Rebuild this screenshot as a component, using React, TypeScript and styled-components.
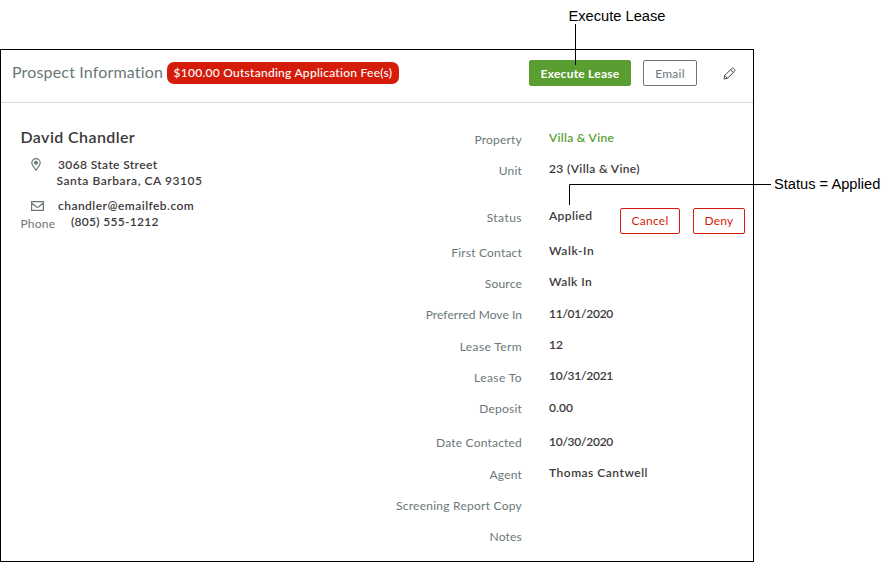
import React from 'react';
import styled, { createGlobalStyle } from 'styled-components';

const GlobalStyle = createGlobalStyle`
  * { box-sizing: border-box; }
  body { margin: 0; background: #fff; overflow: hidden; }
`;

const Page = styled.div`
  position: relative;
  width: 887px;
  height: 562px;
  padding-top: 49px;
  font-family: Lato, sans-serif;
  font-size: 12px;
  line-height: 16px;
  color: #3d3a3b;
  white-space: nowrap;
`;

const Panel = styled.main`
  width: 754px;
  height: 513px;
  border: 1px solid #000;
`;

const Header = styled.header`
  display: flex;
  align-items: flex-start;
  height: 53px;
  padding: 10px 17px 0 11px;
  border-bottom: 1px solid #d9d9d9;
`;

const Title = styled.h1`
  width: 155px;
  margin: 2px 0 0;
  font-size: 16px;
  line-height: 20px;
  font-weight: 400;
  letter-spacing: 0.16px;
  color: #6b7777;
`;

const FeeBadge = styled.span`
  width: 232px;
  height: 22px;
  margin-top: 2px;
  padding-left: 6.5px;
  border-radius: 7px;
  background: #d51c0a;
  color: #fff;
  font-weight: 500;
  line-height: 22px;
  letter-spacing: 0.26px;
`;

const Actions = styled.div`
  display: flex;
  align-items: center;
  gap: 12px;
  margin-left: auto;
`;

type Tone = 'primary' | 'neutral' | 'danger';
const tones: Record<Tone, string> = {
  primary: 'background: #5a9e32; border-color: #5a9e32; color: #fff; font-weight: 700;',
  neutral: 'background: #fff; border-color: #6b7777; color: #6b7777;',
  danger: 'padding-top: 0; background: #fff; border-color: #d51c0a; color: #d51c0a;',
};

const Button = styled.button<{ $tone: Tone; $width: number }>`
  width: ${(p) => p.$width}px;
  height: 26px;
  padding: 2px 0 0;
  border: 1px solid;
  border-radius: 2px;
  font: 400 12px/20px Lato, sans-serif;
  letter-spacing: 0.24px;
  ${(p) => tones[p.$tone]}
`;

const EditIcon = styled.svg`
  width: 13px;
  height: 13px;
  margin-left: 14px;
`;

const Body = styled.div`
  display: flex;
  justify-content: space-between;
  padding: 27px 1px 0 19.5px;
`;

const Contact = styled.section`
  width: 240px;
`;

const Name = styled.h2`
  margin: -3px 0 10px;
  font-size: 16px;
  line-height: 20px;
  font-weight: 600;
  letter-spacing: 0.4px;
`;

const ContactLine = styled.div`
  display: flex;
  height: 16px;
`;

const IconSlot = styled.span`
  display: flex;
  width: 37.5px;
  padding-left: 10.5px;
  align-items: center;
`;

const PinIcon = styled.svg`
  width: 10px;
  height: 13px;
  margin-top: -1px;
`;

const MailIcon = styled.svg`
  width: 13px;
  height: 10px;
`;

const Strong = styled.span<{ $track?: number; $green?: boolean }>`
  font-weight: 600;
  letter-spacing: ${(p) => p.$track ?? 0.3}px;
  color: ${(p) => (p.$green ? '#5a9e32' : 'inherit')};
`;

const SecondLine = styled.div`
  padding-left: 36px;
  margin-bottom: 9px;
`;

const PhoneLine = styled.div`
  display: flex;
`;

const Muted = styled.span<{ $track?: number }>`
  color: #6b7777;
  letter-spacing: ${(p) => p.$track ?? 0.2}px;
`;

const PhoneLabel = styled(Muted)`
  width: 50.5px;
  padding-top: 2px;
`;

const Details = styled.dl`
  width: 360px;
  margin: 0;
`;

const Row = styled.div<{ $height: number }>`
  display: grid;
  grid-template-columns: 130px 70px auto;
  height: ${(p) => p.$height}px;
`;

const Label = styled.dt<{ $track?: number }>`
  padding-top: 2px;
  text-align: right;
  color: #6b7777;
  letter-spacing: ${(p) => p.$track ?? 0.2}px;
`;

const Value = styled.dd<{ $drop?: number }>`
  width: 70px;
  margin: 0 0 0 27px;
  padding-top: ${(p) => p.$drop ?? 0}px;
`;

const RowActions = styled.div`
  display: flex;
  gap: 13px;
  margin-left: 28px;
`;

const Callout = styled.div<{ $x: number; $y: number }>`
  position: absolute;
  left: ${(p) => p.$x}px;
  top: ${(p) => p.$y}px;
  font: 14.67px/18px 'Liberation Sans', Arial, sans-serif;
  color: #000;
`;

const Leader = styled.svg`
  position: absolute;
  inset: 0;
  width: 887px;
  height: 562px;
  pointer-events: none;
`;

type Detail = {
  label: string; value?: string; height: number;
  lt?: number; vt?: number; drop?: number; green?: boolean; actions?: boolean;
};

const details: Detail[] = [
  { label: 'Property', value: 'Villa & Vine', height: 31, vt: 0.3, green: true },
  { label: 'Unit', value: '23 (Villa & Vine)', height: 47, vt: 0.36 },
  { label: 'Status', value: 'Applied', height: 35, lt: 0.45, vt: 0.38, actions: true },
  { label: 'First Contact', value: 'Walk-In', height: 31, vt: 0.55 },
  { label: 'Source', value: 'Walk In', height: 31, vt: 0.45 },
  { label: 'Preferred Move In', value: '11/01/2020', height: 32, lt: 0.05, vt: -0.27, drop: 1 },
  { label: 'Lease Term', value: '12', height: 31, lt: 0.38, vt: 0 },
  { label: 'Lease To', value: '10/31/2021', height: 31, lt: 0.4, vt: -0.27 },
  { label: 'Deposit', value: '0.00', height: 34, vt: 0.1, drop: 1 },
  { label: 'Date Contacted', value: '10/30/2020', height: 32, vt: -0.27, drop: 1 },
  { label: 'Agent', value: 'Thomas Cantwell', height: 31, vt: 0.5 },
  { label: 'Screening Report Copy', height: 31, lt: 0.25 },
  { label: 'Notes', height: 18 },
];

export default function App() {
  return (
    <Page>
      <GlobalStyle />
      <Panel>
        <Header>
          <Title>Prospect Information</Title>
          <FeeBadge>$100.00 Outstanding Application Fee(s)</FeeBadge>
          <Actions>
            <Button $tone="primary" $width={102}>Execute Lease</Button>
            <Button $tone="neutral" $width={54}>Email</Button>
            <EditIcon viewBox="0 0 13 13" fill="none" stroke="#4a4546" strokeLinejoin="round">
              <path d="M1 12l.8-3.6 6.9-6.9q1-1 2 0l.8.8q1 1 0 2l-6.9 6.9zM7.5 2.7l2.8 2.8M1.8 8.4l2.8 2.8" />
            </EditIcon>
          </Actions>
        </Header>
        <Body>
          <Contact>
            <Name>David Chandler</Name>
            <ContactLine>
              <IconSlot>
                <PinIcon viewBox="0 0 10 13" fill="none" stroke="#6b7777" strokeWidth="1.2">
                  <path d="M5 12.2C3.8 10.2.8 7.3.8 4.8a4.2 4.2 0 0 1 8.4 0C9.2 7.3 6.2 10.2 5 12.2z" />
                  <circle cx="5" cy="4.8" r="1.4" fill="#6b7777" />
                </PinIcon>
              </IconSlot>
              <Strong $track={0.37}>3068 State Street</Strong>
            </ContactLine>
            <SecondLine><Strong $track={0.56}>Santa Barbara, CA 93105</Strong></SecondLine>
            <ContactLine>
              <IconSlot>
                <MailIcon viewBox="0 0 13 10" fill="none" stroke="#6b7777" strokeWidth="1.2">
                  <path d="M.6.6h11.8v8.8H.6zM.8 2.2l4.5 3.6q1.2.9 2.4 0l4.5-3.6" />
                </MailIcon>
              </IconSlot>
              <Strong $track={0.46}>chandler@emailfeb.com</Strong>
            </ContactLine>
            <PhoneLine>
              <PhoneLabel $track={0.2}>Phone</PhoneLabel>
              <Strong $track={0.3}>(805) 555-1212</Strong>
            </PhoneLine>
          </Contact>
          <Details>
            {details.map((d) => (
              <Row key={d.label} $height={d.height}>
                <Label $track={d.lt}>{d.label}</Label>
                <Value $drop={d.drop}>
                  {d.value && <Strong $track={d.vt} $green={d.green}>{d.value}</Strong>}
                </Value>
                {d.actions && (
                  <RowActions>
                    <Button $tone="danger" $width={60}>Cancel</Button>
                    <Button $tone="danger" $width={52}>Deny</Button>
                  </RowActions>
                )}
              </Row>
            ))}
          </Details>
        </Body>
      </Panel>
      <Callout $x={568.5} $y={7}>Execute Lease</Callout>
      <Callout $x={774} $y={175}>Status = Applied</Callout>
      <Leader viewBox="0 0 887 562" fill="none" stroke="#000">
        <path d="M575.5 24v41M569.5 205v-20.5H771" />
      </Leader>
    </Page>
  );
}
